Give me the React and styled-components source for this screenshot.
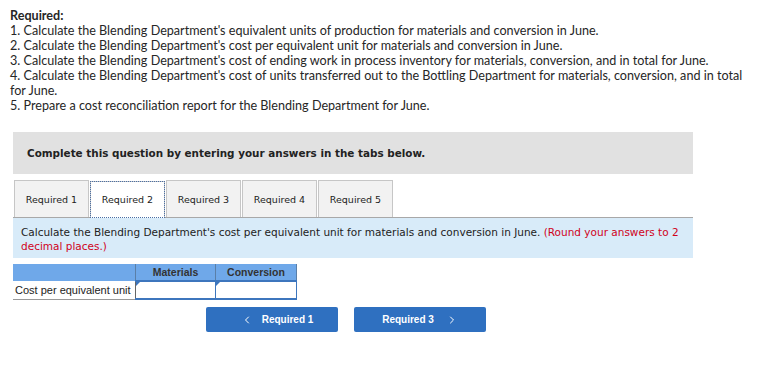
import React, { useState } from 'react';
import styled, { createGlobalStyle } from 'styled-components';
import { FiChevronLeft, FiChevronRight } from 'react-icons/fi';

const GlobalStyle = createGlobalStyle`
    body {
        margin: 0;
        background: #fff;
    }
`;

const Page = styled.div`
    width: 776px;
    padding: 8px 0 0 0;
`;

const Instructions = styled.div`
    width: 740px;
    margin-left: 10px;
    font-family: Lato, "Open Sans", sans-serif;
    font-size: 12.6px;
    line-height: 15px;
    color: #262626;

    p {
        margin: 0;
    }
`;

const Heading = styled.p`
    font-weight: 700;
`;

const Main = styled.div`
    width: 680px;
    margin: 19px 0 0 13px;
`;

const QuestionBox = styled.div`
    height: 42px;
    background: #e1e1e1;
    display: flex;
    align-items: center;
    padding-left: 14px;
    font-family: "DejaVu Sans", Verdana, sans-serif;
    font-weight: 700;
    font-size: 10.4px;
    color: #222;
`;

const TabStrip = styled.div`
    display: flex;
    align-items: flex-end;
    gap: 1px;
    margin-top: 6px;
    padding-left: 1px;
    border-bottom: 1px solid #a8a8a8;
`;

const Tab = styled.button`
    width: 75px;
    height: 37px;
    margin-bottom: ${p => (p.$active ? '-1px' : '0')};
    background: ${p => (p.$active ? '#fff' : '#f2f2f2')};
    border: 1px solid #c6c6c6;
    border-bottom: ${p => (p.$active ? '1px solid #fff' : 'none')};
    outline: ${p => (p.$active ? '1px dotted #4a6fa5' : 'none')};
    outline-offset: -1px;
    font-family: "DejaVu Sans", Verdana, sans-serif;
    font-size: 9.5px;
    color: #222;
    padding: 0;
    cursor: pointer;
`;

const Panel = styled.div`
    background: #d8ebf9;
    padding: 8px 8px 5px 8px;
    font-family: "DejaVu Sans", Verdana, sans-serif;
    font-size: 10.5px;
    line-height: 13.5px;
    color: #222;
`;

const Note = styled.span`
    color: #d0021b;
`;

const Grid = styled.table`
    margin-top: 6px;
    border-collapse: collapse;
    font-family: "Liberation Sans", Arial, sans-serif;
    font-size: 11px;
    color: #222;
`;

const HeadCell = styled.th`
    height: 16px;
    padding: 0;
    background: #6fa8e9;
    border-right: 1px solid #5a7fa8;
    font-weight: 700;
    font-size: 10.5px;
    color: #333;
    width: ${p => p.$w}px;
`;

const LabelCell = styled.td`
    height: 16px;
    padding: 0 0 0 2px;
    border-bottom: 1px solid #999;
    border-right: 1px solid #666;
    white-space: nowrap;
`;

const InputCell = styled.td`
    padding: 0;
    height: 16px;
    position: relative;
    border: 2px solid #3d76bd;
    border-width: 2px 1px 2px 1px;
    background: #fff;

    &::before {
        content: '';
        position: absolute;
        top: 0;
        left: 0;
        border-top: 4px solid #3d76bd;
        border-right: 4px solid transparent;
    }
`;

const Nav = styled.div`
    display: flex;
    gap: 16px;
    margin: 7px 0 0 206px;
`;

const NavButton = styled.button`
    width: 132px;
    height: 25px;
    background: #2f70c0;
    border: none;
    border-radius: 2px;
    color: #fff;
    font-family: "Liberation Sans", Arial, sans-serif;
    font-weight: 700;
    font-size: 10px;
    display: flex;
    align-items: center;
    justify-content: center;
    gap: ${p => (p.$back ? '9px' : '12px')};
    padding: ${p => (p.$back ? '0 0 0 10px' : '0')};
    cursor: pointer;

    svg {
        font-size: 12px;
    }
`;

const tabs = ['Required 1', 'Required 2', 'Required 3', 'Required 4', 'Required 5'];

const App = () => {
    const [active, setActive] = useState(1);

    return (
        <Page>
            <GlobalStyle />
            <Instructions>
                <Heading>Required:</Heading>
                <p>1. Calculate the Blending Department's equivalent units of production for materials and conversion in June.</p>
                <p>2. Calculate the Blending Department's cost per equivalent unit for materials and conversion in June.</p>
                <p>3. Calculate the Blending Department's cost of ending work in process inventory for materials, conversion, and in total for June.</p>
                <p>4. Calculate the Blending Department's cost of units transferred out to the Bottling Department for materials, conversion, and in total for June.</p>
                <p>5. Prepare a cost reconciliation report for the Blending Department for June.</p>
            </Instructions>

            <Main>
                <QuestionBox>Complete this question by entering your answers in the tabs below.</QuestionBox>

                <TabStrip>
                    {tabs.map((t, i) => (
                        <Tab key={t} $active={i === active} onClick={() => setActive(i)}>
                            {t}
                        </Tab>
                    ))}
                </TabStrip>

                <Panel>
                    Calculate the Blending Department's cost per equivalent unit for materials and conversion in June.{' '}
                    <Note>(Round your answers to 2 decimal places.)</Note>
                </Panel>

                <Grid>
                    <thead>
                        <tr>
                            <HeadCell $w={122}></HeadCell>
                            <HeadCell $w={79}>Materials</HeadCell>
                            <HeadCell $w={80}>Conversion</HeadCell>
                        </tr>
                    </thead>
                    <tbody>
                        <tr>
                            <LabelCell>Cost per equivalent unit</LabelCell>
                            <InputCell />
                            <InputCell />
                        </tr>
                    </tbody>
                </Grid>
            </Main>

            <Nav>
                <NavButton $back>
                    <FiChevronLeft />
                    Required 1
                </NavButton>
                <NavButton>
                    Required 3
                    <FiChevronRight />
                </NavButton>
            </Nav>
        </Page>
    );
};

export default App;
